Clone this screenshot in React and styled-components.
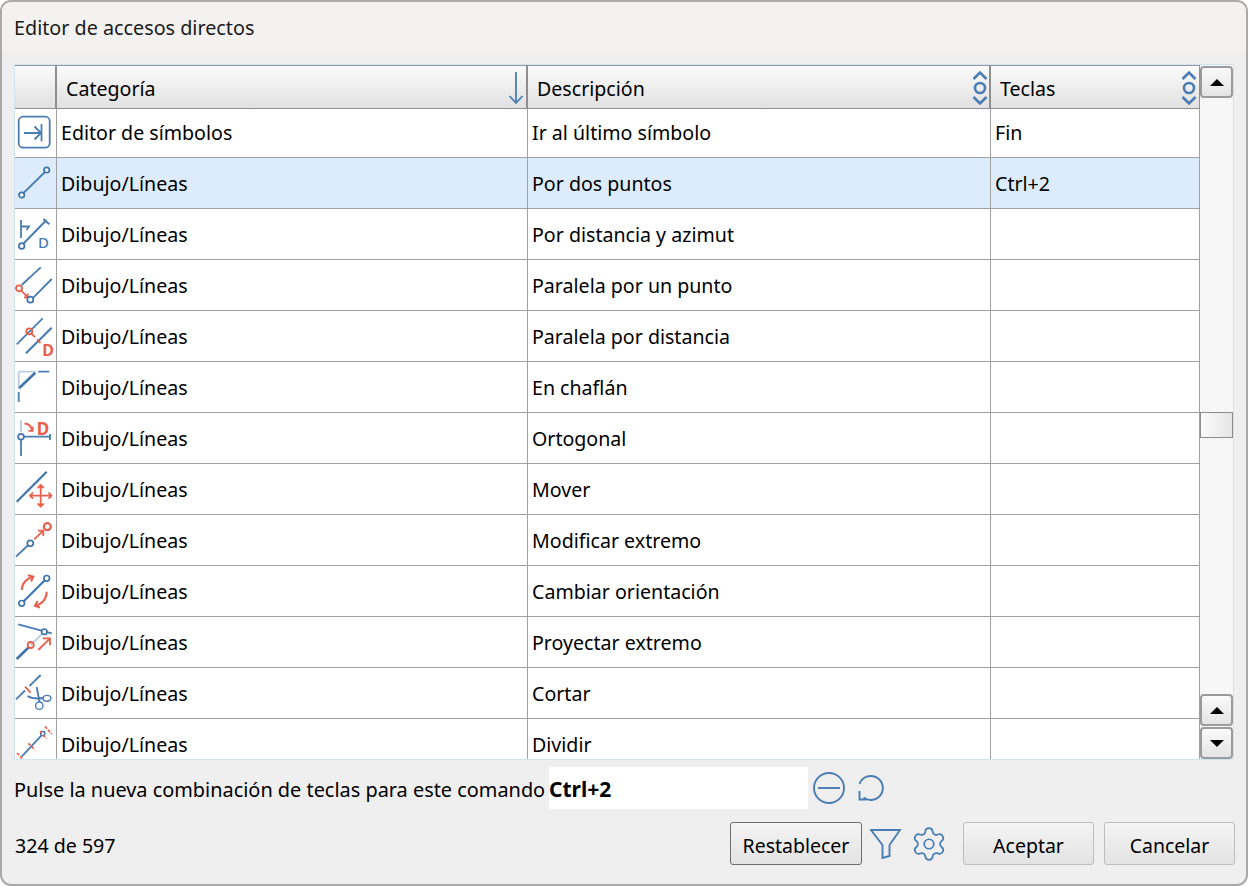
import styled, { createGlobalStyle } from "styled-components";
import { Settings } from "lucide-react";

const BLUE = "#4a7db3";
const DARK = "#3f74ad";
const LIGHT = "#b9cde2";
const RED = "#e8604c";

const GlobalStyle = createGlobalStyle`
  html, body {
    margin: 0;
    background: #fff;
  }
  * {
    box-sizing: border-box;
  }
`;

const Window = styled.div`
  width: 1248px;
  height: 886px;
  display: flex;
  flex-direction: column;
  overflow: hidden;
  background: #efefef;
  border: 2px solid #aaa;
  border-radius: 11px;
  font-family: "Noto Sans", "Open Sans", sans-serif;
  font-size: 19.6px;
  color: #000;
`;

const TitleBar = styled.div`
  height: 50px;
  flex: none;
  display: flex;
  align-items: center;
  padding-left: 12px;
  background: #f3f2f1;
  color: #1a1a1a;
  font-size: 19.75px;
`;

const Frame = styled.div`
  height: 696px;
  flex: none;
  margin: 12px 12px 0;
  display: flex;
  border: 1px solid #d3e1f0;
  background: #fff;
`;

const Table = styled.div`
  width: 1185px;
  flex: none;
  overflow: hidden;
`;

const COLUMNS = "42px 471px 463px 209px";

const HeaderRow = styled.div`
  height: 44px;
  display: grid;
  grid-template-columns: ${COLUMNS};
`;

const HeaderCell = styled.div`
  position: relative;
  display: flex;
  align-items: center;
  padding: 3px 0 0 9px;
  background: linear-gradient(#fbfbfb, #e1e1e1);
  border-top: 1px solid #999;
  border-right: 2px solid #8f8f8f;
  border-bottom: 1px solid #8f8f8f;
  &:last-child {
    border-right: 1px solid #8f8f8f;
  }
`;

const SortIcon = styled.svg`
  position: absolute;
  right: ${(p) => p.$right}px;
  top: 4px;
`;

const Row = styled.div`
  height: ${(p) => (p.$first ? 49 : 51)}px;
  display: grid;
  grid-template-columns: ${COLUMNS};
  grid-template-rows: minmax(0, 1fr);
  background: ${(p) => (p.$selected ? "#ddecfc" : "#fff")};
  border-bottom: 1px solid #a0a0a0;
`;

const Cell = styled.div`
  display: flex;
  align-items: center;
  padding: 0 0 ${(p) => (p.$first ? 2 : 0)}px 4px;
  border-right: 1px solid #a0a0a0;
`;

const IconCell = styled.div`
  overflow: hidden;
  border-right: 1px solid #a0a0a0;
  line-height: 0;
`;

const Scrollbar = styled.div`
  width: 33px;
  flex: none;
  display: flex;
  flex-direction: column;
  background-color: #fff;
  background-image: repeating-conic-gradient(#efefef 0 25%, #fff 0 50%);
  background-size: 2px 2px;
`;

const ScrollButton = styled.div`
  height: 32px;
  margin-top: ${(p) => p.$top || 0}px;
  flex: none;
  display: flex;
  align-items: center;
  justify-content: center;
  background: linear-gradient(#fafafa, #e4e4e4);
  border: 2px solid #9a9a9a;
  border-radius: 4px;
`;

const Thumb = styled.div`
  height: 26px;
  flex: none;
  margin-top: 314px;
  margin-bottom: auto;
  background: linear-gradient(90deg, #fbfbfb, #e4e4e4);
  border: 1.5px solid #8c8c8c;
`;

const Triangle = styled.div`
  width: 0;
  height: 0;
  border-left: 7px solid transparent;
  border-right: 7px solid transparent;
  ${(p) => (p.$down ? "border-top: 7px solid #000;" : "border-bottom: 7px solid #000;")}
`;

const KeyRow = styled.div`
  height: 42px;
  flex: none;
  margin: 7px 0 0 12px;
  display: flex;
  align-items: center;
`;

const KeyLabel = styled.span`
  width: 535px;
  flex: none;
  padding-top: 2px;
  font-size: 19.9px;
  white-space: nowrap;
`;

const KeyInput = styled.div`
  width: 259px;
  height: 42px;
  flex: none;
  display: flex;
  align-items: center;
  padding-top: 2px;
  background: #fff;
  font-size: 21px;
  font-weight: 700;
`;

const KeyIcons = styled.div`
  display: flex;
  align-items: center;
  gap: 10px;
  margin-left: 4px;
`;

const Footer = styled.div`
  height: 43px;
  flex: none;
  margin: 13px 11px 0 13px;
  display: flex;
  align-items: center;
`;

const Counter = styled.span`
  margin-right: auto;
  padding-top: 3px;
`;

const Button = styled.button`
  width: ${(p) => (p.$reset ? 132 : 131)}px;
  height: 43px;
  padding: 3px 0 0;
  margin-left: ${(p) => p.$gap || 0}px;
  font: inherit;
  font-size: 19.5px;
  color: #000;
  background: linear-gradient(#f4f4f4, #e3e3e3);
  border: 1px solid ${(p) => (p.$reset ? "#6e6e6e" : "#bdbdbd")};
  border-radius: 3px;
`;

const ToolIcon = styled.svg`
  flex: none;
  margin-left: ${(p) => p.$gap}px;
`;

const GearIcon = styled(Settings)`
  flex: none;
  margin-left: 8px;
  margin-right: 15px;
`;

const stroke = { fill: "none", stroke: BLUE, strokeWidth: 1.8 };
const thick = { fill: "none", stroke: DARK, strokeWidth: 2.6 };
const faint = { fill: "none", stroke: LIGHT, strokeWidth: 1.8 };
const red = { fill: "none", stroke: RED, strokeWidth: 1.8 };
const node = { fill: "#fff", stroke: DARK, strokeWidth: 1.7 };
const redNode = { fill: "none", stroke: RED, strokeWidth: 1.8 };

const Letter = ({ x, y, size, color, weight = 700 }) => (
  <text x={x} y={y} fontSize={size} fontWeight={weight} fill={color} fontFamily="Noto Sans, sans-serif" textAnchor="middle">
    D
  </text>
);

const ICONS = {
  last: (
    <>
      <rect x="3.7" y="7.7" width="31" height="31" rx="4.5" {...stroke} />
      <path d="M9 24H26M19.5 17.5L26 24L19.5 30.5M26.5 15V32.5" {...stroke} />
    </>
  ),
  twoPoints: (
    <>
      <path d="M8.5 35L30 14" {...stroke} />
      <circle cx="6.7" cy="37" r="2.7" {...node} />
      <circle cx="31.7" cy="12" r="2.7" {...node} />
    </>
  ),
  azimuth: (
    <>
      <path d="M6 11V29M6 17.5H14L11.5 21" {...stroke} />
      <path d="M8.5 34.5L31.5 11M28.3 10L34.3 15.3" {...stroke} strokeWidth="2" />
      <circle cx="6.7" cy="37" r="2.8" {...node} />
      <Letter x="28.5" y="39" size="15" color={BLUE} weight={500} />
    </>
  ),
  parallelPoint: (
    <>
      <path d="M6.7 25L25.7 7.3M18.3 37.7L36.7 19" {...stroke} />
      <path d="M6.7 31L12.7 37.3M12.7 33.5V37.3H9" {...red} />
      <circle cx="4" cy="28.3" r="3" {...redNode} />
      <circle cx="15.3" cy="39.7" r="3" {...node} />
    </>
  ),
  parallelDistance: (
    <>
      <path d="M1.7 33.3L27.7 7.3" {...stroke} />
      <path d="M11 42.3L36.7 16.7" {...stroke} strokeWidth="2.2" />
      <path d="M16.5 22.5L26.5 33" {...red} strokeDasharray="5 3" />
      <circle cx="14.3" cy="20.3" r="3" {...redNode} />
      <Letter x="33" y="44.5" size="16" color={RED} />
    </>
  ),
  chamfer: (
    <>
      <path d="M3.7 10V27M3.7 9.7H20" {...faint} />
      <path d="M3.7 30V40M23.3 9.7H34.3" {...stroke} />
      <path d="M4.3 26L20.3 10.7" {...thick} />
    </>
  ),
  orthogonal: (
    <>
      <path d="M6 7V19" {...faint} />
      <path d="M6 26.5V43M9 23.7H35M35 21V27" {...stroke} />
      <circle cx="6" cy="23.7" r="2.9" {...node} />
      <path d="M9.5 10.5C13 10.5 16 12.5 17.5 18M13.5 17.8H17.7V13.8" {...red} />
      <Letter x="28" y="21.5" size="17" color={RED} />
    </>
  ),
  move: (
    <>
      <path d="M1.7 37.7L31.7 7.7" {...thick} strokeWidth="2.2" />
      <path
        d="M25.7 21V42.5M15 31.7H36.5M22.7 24L25.7 21L28.7 24M22.7 39.5L25.7 42.5L28.7 39.5M18 28.7L15 31.7L18 34.7M33.5 28.7L36.5 31.7L33.5 34.7"
        {...red}
      />
    </>
  ),
  extreme: (
    <>
      <path d="M1 41.7L13.3 30" {...stroke} />
      <circle cx="15.3" cy="28.3" r="3" {...node} />
      <path d="M19.3 24.3L28.3 15.7M23 15.7H28.3V21" {...red} />
      <circle cx="32.3" cy="11.7" r="3.5" {...red} strokeWidth="2.2" />
    </>
  ),
  orientation: (
    <>
      <path d="M8.5 35.5L30 14" {...thick} strokeWidth="2.2" />
      <circle cx="6.7" cy="37.3" r="2.8" {...node} />
      <circle cx="31.7" cy="12.3" r="2.8" {...node} />
      <path d="M6.7 24C7 17 12 12 18.3 10.7M13 9.3L18.3 10.7L16 15.5" {...red} strokeWidth="2" />
      <path d="M31.7 25.7C31.5 33 27 38 20 40M25 41.5L20 40L22.5 35" {...red} strokeWidth="2" />
    </>
  ),
  project: (
    <>
      <path d="M3.3 7.3L36.7 16.3" {...stroke} />
      <path d="M29.3 14.7L15.7 28" {...faint} />
      <path d="M13.5 30.5L1.7 42" {...thick} />
      <circle cx="29.3" cy="14.7" r="2.7" {...node} />
      <circle cx="15.7" cy="28" r="3" {...redNode} />
      <path d="M23.3 33L35 21.3M28 21.3H35V28.3" {...red} />
    </>
  ),
  cut: (
    <>
      <path d="M1 31.3L10 22.5M14.5 18L25.7 7" {...stroke} />
      <path d="M10 18.7L15.7 24.7" {...red} />
      <path d="M21.7 19L24.5 34M12.5 28C17 31 22 31 28.5 30" {...stroke} />
      <circle cx="24.3" cy="37.7" r="3.7" {...stroke} strokeWidth="1.4" />
      <ellipse cx="32" cy="30.3" rx="3.9" ry="2.9" {...stroke} strokeWidth="1.4" />
    </>
  ),
  divide: (
    <>
      <path d="M6.7 37.7L30 12.7" {...stroke} />
      <circle cx="27.7" cy="14.5" r="2.2" {...node} strokeWidth="1.3" />
      <path d="M13.3 24.3L20 31M25 12.5L31.5 19.5M30 7.5L36.7 15M2 34L7.5 40" {...red} strokeDasharray="3 1.5" />
    </>
  ),
};

const ROWS = [
  { icon: "last", category: "Editor de símbolos", description: "Ir al último símbolo", keys: "Fin" },
  { icon: "twoPoints", description: "Por dos puntos", keys: "Ctrl+2" },
  { icon: "azimuth", description: "Por distancia y azimut" },
  { icon: "parallelPoint", description: "Paralela por un punto" },
  { icon: "parallelDistance", description: "Paralela por distancia" },
  { icon: "chamfer", description: "En chaflán" },
  { icon: "orthogonal", description: "Ortogonal" },
  { icon: "move", description: "Mover" },
  { icon: "extreme", description: "Modificar extremo" },
  { icon: "orientation", description: "Cambiar orientación" },
  { icon: "project", description: "Proyectar extremo" },
  { icon: "cut", description: "Cortar" },
  { icon: "divide", description: "Dividir" },
];

const SortBoth = ({ right }) => (
  <SortIcon $right={right} width="16" height="36" viewBox="0 0 16 36" {...stroke} strokeWidth="2.6">
    <path d="M1.5 9L8 2.5L14.5 9" />
    <circle cx="8" cy="18" r="5" />
    <path d="M1.5 27L8 33.5L14.5 27" />
  </SortIcon>
);

const App = () => {
  return (
    <Window>
      <GlobalStyle />
      <TitleBar>Editor de accesos directos</TitleBar>
      <Frame>
        <Table>
          <HeaderRow>
            <HeaderCell />
            <HeaderCell>
              Categoría
              <SortIcon $right={1} width="18" height="36" viewBox="0 0 18 36" {...stroke} strokeWidth="1.8">
                <path d="M9 2V33M2.5 26L9 33L15.5 26" />
              </SortIcon>
            </HeaderCell>
            <HeaderCell>
              Descripción
              <SortBoth right={1} />
            </HeaderCell>
            <HeaderCell>
              Teclas
              <SortBoth right={2} />
            </HeaderCell>
          </HeaderRow>
          {ROWS.map((row, i) => (
            <Row key={row.icon} $first={i === 0} $selected={i === 1}>
              <IconCell>
                <svg width="41" height="50" viewBox="0 0 41 50">
                  {ICONS[row.icon]}
                </svg>
              </IconCell>
              <Cell $first={i === 0}>{row.category || "Dibujo/Líneas"}</Cell>
              <Cell $first={i === 0}>{row.description}</Cell>
              <Cell $first={i === 0}>{row.keys}</Cell>
            </Row>
          ))}
        </Table>
        <Scrollbar>
          <ScrollButton $top={1}>
            <Triangle />
          </ScrollButton>
          <Thumb />
          <ScrollButton>
            <Triangle />
          </ScrollButton>
          <ScrollButton $top={1}>
            <Triangle $down />
          </ScrollButton>
        </Scrollbar>
      </Frame>
      <KeyRow>
        <KeyLabel>Pulse la nueva combinación de teclas para este comando</KeyLabel>
        <KeyInput>Ctrl+2</KeyInput>
        <KeyIcons>
          <svg width="34" height="34" viewBox="0 0 34 34" {...stroke} strokeWidth="1.9">
            <circle cx="17" cy="17" r="15" />
            <path d="M6 17H28" />
          </svg>
          <svg width="28" height="28" viewBox="0 0 28 28" {...stroke} strokeWidth="1.9">
            <path d="M3.5 10A12 12 0 1 1 7.5 23.5" />
            <path d="M3.5 17V25.5H10.5" />
          </svg>
        </KeyIcons>
      </KeyRow>
      <Footer>
        <Counter>324 de 597</Counter>
        <Button $reset>Restablecer</Button>
        <ToolIcon $gap={8} width="32" height="32" viewBox="0 0 32 32" {...stroke} strokeWidth="1.9">
          <path d="M1 2H30L19.5 17V28L12.5 30V17Z" />
        </ToolIcon>
        <GearIcon size={38} color={BLUE} strokeWidth={1.1} />
        <Button>Aceptar</Button>
        <Button $gap={10}>Cancelar</Button>
      </Footer>
    </Window>
  );
};

export default App;
